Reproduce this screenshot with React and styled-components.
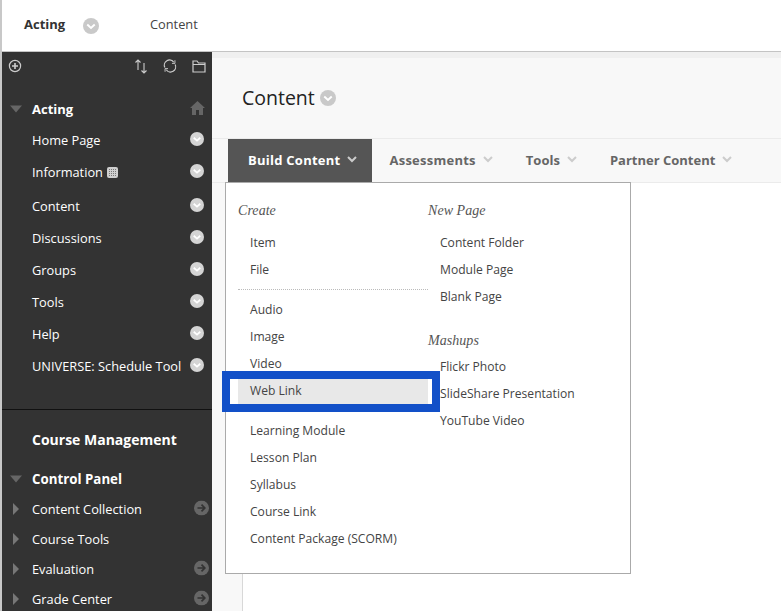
import React from 'react';
import styled, { createGlobalStyle } from 'styled-components';

const Global = createGlobalStyle`
  html, body { margin: 0; padding: 0; background: #fff; overflow: hidden; }
  body { font-family: "Open Sans", sans-serif; }
  * { box-sizing: border-box; }
`;
const Page = styled.div`width: 781px; height: 611px; overflow: hidden; display: flex; flex-direction: column; position: relative;`;
const TopBar = styled.header`
  height: 52px; flex: none; display: flex; align-items: center;
  border-bottom: 1px solid #c4c4c4; border-left: 2px solid #c8c8c8; padding-left: 22px; background: #fff; color: #333;
`;
const Crumb = styled.span`font-size: 13px; font-weight: 700; color: #333; margin-top: -4px; width: 59px;`;
const CrumbLink = styled.span`font-size: 12.8px; color: #444; margin-left: 51px; margin-top: -4px;`;
const Body = styled.div`flex: 1; display: flex; min-height: 0;`;
const Side = styled.aside`
  width: 212px; flex: none; background: #333; border-left: 2px solid #c8c8c8; color: #fff; overflow: hidden;
`;
const SideTools = styled.div`height: 28px; display: flex; align-items: center; padding: 0 0 0 6px;`;
const ToolSpacer = styled.div`flex: 1;`;
const ToolGroup = styled.div`display: flex; gap: 15px; align-items: center; padding-right: 6px;`;
const CourseList = styled.div`padding-top: 13px; height: 330px; border-bottom: 1px solid #111;`;
const Row = styled.div`
  height: ${p => p.$h || 32}px; display: flex; align-items: center; position: relative; padding-left: 30px;
  font-size: ${p => p.$size || 12.8}px; font-weight: ${p => p.$bold ? 700 : 400}; color: #fff; white-space: nowrap;
`;
const RowIcon = styled.span`position: absolute; right: ${p => p.$r ?? 6}px; top: calc(50% - 1px); transform: translateY(-50%); display: flex;`;
const Twist = styled.span`position: absolute; left: ${p => p.$l}px; top: 50%; transform: translateY(-50%); width: 0; height: 0;
  ${p => p.$open
    ? 'border-left: 6px solid transparent; border-right: 6px solid transparent; border-top: 7px solid #666;'
    : 'border-top: 6px solid transparent; border-bottom: 6px solid transparent; border-left: 6px solid #777;'}
`;
const CourseMgmt = styled.div`padding: 19px 0 13px 30px; font-size: 14px; font-weight: 700; color: #fff; line-height: 22px;`;
const GridIcon = styled.svg`margin-left: 4px; flex: none; margin-top: 1px;`;
const Main = styled.main`flex: 1; background: #f8f8f8; min-width: 0; position: relative; border-top: 6px solid #f0f0f0;`;
const TitleBar = styled.div`height: 81px; display: flex; align-items: center; padding-left: 30px; border-bottom: 1px solid #ebebeb;`;
const Title = styled.h1`margin: -1px 0 0 0; font-size: 19.5px; font-weight: 400; color: #222; display: flex; align-items: center; gap: 5px;`;
const Tabs = styled.nav`height: 44px; display: flex; border-bottom: 1px solid #ebebeb; padding-left: 16px;`;
const Tab = styled.div`
  height: 43px; display: flex; align-items: center; gap: 7px; font-size: 13px; font-weight: 700; letter-spacing: .25px; padding-bottom: 2px;
  padding-left: ${p => p.$on ? 20 : 17}px; padding-right: ${p => p.$on ? 15 : 16}px; background: ${p => p.$on ? '#555' : 'transparent'}; color: ${p => p.$on ? '#fff' : '#666'};
`;
const TabNarrow = styled(Tab)`letter-spacing: 0;`;
const Canvas = styled.div`position: absolute; left: 30px; right: 0; top: 125px; bottom: 0; background: #fff; border-left: 1px solid #d8d8d8;`;
const Menu = styled.div`
  position: absolute; left: 13px; top: 124px; width: 406px; height: 392px; background: #fff; border: 1px solid #aaa;
  display: grid; grid-template-columns: 202px 1fr; color: #444; z-index: 2;
`;
const Col = styled.div`padding-top: 17px; display: flex; flex-direction: column;`;
const Head = styled.div`font-family: "Liberation Serif", serif; font-style: italic; font-size: 14px; letter-spacing: .05px; color: #555; height: 20px; line-height: 20px;
  padding-left: ${p => p.$pl ?? 12}px; margin-top: ${p => p.$mt ?? 1}px; margin-bottom: ${p => p.$mb ?? 8}px;`;
const Item = styled.div`
  height: 27px; line-height: 27px; font-size: 12.1px; color: #444; padding-left: ${p => p.$pl || 24}px; white-space: nowrap; flex: none;
  ${p => p.$on && 'background: #e8e8e8; margin-left: 12px; padding-left: 12px;'}
`;
const Sep = styled.div`border-top: 1px dotted #bbb; margin: 6px 0 6px 12px;`;
const Gap = styled.div`height: 13px; flex: none;`;
const Highlight = styled.div`
  position: absolute; left: 222px; top: 371px; width: 218px; height: 41px; border: 8px solid #1250c8; z-index: 3; pointer-events: none;
`;

const Chev = ({ size = 18, bg = '#c9c9c9', fg = '#fff' }) => (
  <svg width={size} height={size} viewBox="0 0 18 18">
    <circle cx="9" cy="9" r="9" fill={bg} />
    <path d="M4.8 7.4 9 11.2l4.2-3.8" fill="none" stroke={fg} strokeWidth="2.2" />
  </svg>
);
const SideChev = () => <Chev size={14} bg="#d4d4d4" fg="#fff" />;
const Arrow = () => (
  <svg width="15" height="15" viewBox="0 0 15 15">
    <circle cx="7.5" cy="7.5" r="7.5" fill="#666" />
    <path d="M3.5 7.5h7M7.5 4.2l3.3 3.3-3.3 3.3" fill="none" stroke="#333" strokeWidth="1.7" />
  </svg>
);
const Caret = ({ c }) => (
  <svg width="10" height="7" viewBox="0 0 10 7"><path d="M1 1l4 4 4-4" fill="none" stroke={c} strokeWidth="2" /></svg>
);
const Home = () => (
  <svg width="15" height="14" viewBox="0 0 15 14"><path d="M7.5 0 15 7h-2v7H9V9H6v5H2V7H0z" fill="#666" /></svg>
);
const Dots = () => (
  <GridIcon width="11" height="11" viewBox="0 0 11 11">
    <rect width="11" height="11" rx="2" fill="#cfcfcf" />
    {[2, 4, 6, 8].flatMap(x => [2, 4, 6, 8].map(y => <rect key={`${x}-${y}`} x={x} y={y} width="1" height="1" fill="#777" />))}
  </GridIcon>
);

const courseItems = [['Home Page', 32], ['Information', 32], ['Content', 35], ['Discussions', 30], ['Groups', 33], ['Tools', 32], ['Help', 32], ['UNIVERSE: Schedule Tool', 32]];
const panel = [['Content Collection', true], ['Course Tools', false], ['Evaluation', true], ['Grade Center', true]];

export default function App() {
  return (
    <Page>
      <Global />
      <TopBar>
        <Crumb>Acting</Crumb>
        <Chev size={16} />
        <CrumbLink>Content</CrumbLink>
      </TopBar>
      <Body>
        <Side>
          <SideTools>
            <svg width="14" height="14" viewBox="0 0 14 14" fill="none" stroke="#ccc" strokeWidth="1.2"><circle cx="7" cy="7" r="5.6" /><path d="M7 4v6M4 7h6" strokeWidth="1.6" /></svg>
            <ToolSpacer />
            <ToolGroup>
              <svg width="14" height="15" viewBox="0 0 14 15" fill="none" stroke="#ccc" strokeWidth="1.1"><path d="M4 11V1M1.5 3.5 4 1l2.5 2.5M10 4v10M7.5 11.5 10 14l2.5-2.5" /></svg>
              <svg width="14" height="14" viewBox="0 0 15 14" fill="none" stroke="#ccc" strokeWidth="1.3"><path d="M2 8.5A5.5 5.5 0 0 1 11.5 3M13 5.5A5.5 5.5 0 0 1 3.5 11" /><path d="M12.8 .8v3.4H9.6M2.2 13.2V9.8h3.2" strokeWidth="1" /></svg>
              <svg width="14" height="13" viewBox="0 0 14 13" fill="none" stroke="#ccc" strokeWidth="1.2"><path d="M1 12V1h4l1.5 2H13v9zM1 4.5h12" /></svg>
            </ToolGroup>
          </SideTools>
          <CourseList>
            <Row $bold $h={31} $size={13}><Twist $l={8} $open /><span>Acting</span><RowIcon $r={7}><Home /></RowIcon></Row>
            {courseItems.map(([t, h]) => (
              <Row key={t} $h={h}>
                {t}{t === 'Information' && <Dots />}
                <RowIcon $r={8}><SideChev /></RowIcon>
              </Row>
            ))}
          </CourseList>
          <CourseMgmt>Course Management</CourseMgmt>
          <Row $bold $h={30} $size={13.3}><Twist $l={8} $open />Control Panel</Row>
          {panel.map(([t, a]) => (
            <Row key={t} $h={30}>
              <Twist $l={11} />{t}{a && <RowIcon $r={3}><Arrow /></RowIcon>}
            </Row>
          ))}
        </Side>
        <Main>
          <TitleBar><Title>Content <Chev size={16} /></Title></TitleBar>
          <Tabs>
            <Tab $on>Build Content <Caret c="#ccc" /></Tab>
            <Tab>Assessments <Caret c="#ccc" /></Tab>
            <TabNarrow>Tools <Caret c="#ccc" /></TabNarrow>
            <TabNarrow>Partner Content <Caret c="#ccc" /></TabNarrow>
          </Tabs>
          <Canvas />
          <Menu>
            <Col>
              <Head>Create</Head>
              <Item>Item</Item>
              <Item>File</Item>
              <Sep />
              <Item>Audio</Item>
              <Item>Image</Item>
              <Item>Video</Item>
              <Item $on>Web Link</Item>
              <Gap />
              <Item>Learning Module</Item>
              <Item>Lesson Plan</Item>
              <Item>Syllabus</Item>
              <Item>Course Link</Item>
              <Item>Content Package (SCORM)</Item>
            </Col>
            <Col>
              <Head $pl={0}>New Page</Head>
              <Item $pl={12}>Content Folder</Item>
              <Item $pl={12}>Module Page</Item>
              <Item $pl={12}>Blank Page</Item>
              <Head $pl={0} $mt={21} $mb={2}>Mashups</Head>
              <Item $pl={12}>Flickr Photo</Item>
              <Item $pl={12}>SlideShare Presentation</Item>
              <Item $pl={12}>YouTube Video</Item>
            </Col>
          </Menu>
        </Main>
      </Body>
      <Highlight />
    </Page>
  );
}
